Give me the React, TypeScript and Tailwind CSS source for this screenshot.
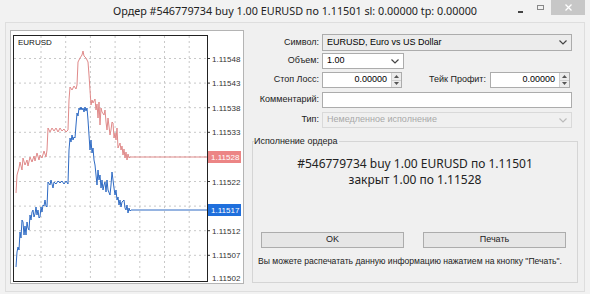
import React from 'react'

const red: [number, number][] = [
  [16,193],[17,175],[19,168],[20,162],[22,170],[23,158],[25,165],[27,160],[28,166],[30,157],[32,162],[34,156],[35,161],[37,153],[39,160],[40,155],[42,158],[44,151],[46,157],[47,150],[48,128],[50,132],[52,128],[54,131],[56,128],[58,132],[60,128],[62,131],[64,129],[66,132],[68,130],[69,100],[70,87],[72,90],[74,86],[76,89],[77,85],[78,62],[80,58],[82,55],[83,51],[84,56],[86,58],[88,62],[89,75],[90,90],[91,105],[92,100],[93,103],[95,99],[96,110],[97,104],[98,118],[99,102],[100,125],[101,108],[102,112],[104,115],[105,110],[106,122],[107,130],[108,118],[110,135],[111,130],[112,122],[113,123],[114,138],[115,133],[116,140],[117,128],[118,148],[120,143],[121,150],[122,146],[123,155],[124,149],[125,158],[126,152],[127,160],[128,154],[129,158],[130,157],[207,157],
]

const blue: [number, number][] = [
  [16,267],[17,252],[18,247],[19,250],[20,232],[21,238],[22,220],[23,222],[24,235],[25,226],[26,235],[27,222],[28,228],[29,230],[30,215],[31,220],[32,212],[33,210],[34,217],[35,214],[36,207],[37,215],[38,210],[39,218],[40,217],[41,207],[42,212],[43,205],[44,206],[45,200],[46,206],[47,207],[48,182],[50,185],[51,180],[53,188],[54,182],[56,184],[58,181],[60,183],[62,181],[64,184],[66,181],[68,184],[69,150],[70,138],[71,142],[72,135],[73,140],[74,137],[75,138],[76,125],[77,113],[78,116],[79,108],[80,110],[81,107],[82,110],[83,108],[84,112],[85,107],[86,111],[87,108],[88,120],[89,135],[90,150],[91,140],[92,153],[93,148],[94,160],[95,165],[96,175],[97,185],[98,170],[99,180],[100,175],[101,188],[102,180],[103,190],[104,185],[105,182],[106,192],[107,180],[108,190],[110,195],[111,185],[112,172],[113,180],[114,188],[115,195],[116,190],[117,200],[118,197],[119,205],[120,200],[121,207],[122,202],[124,200],[125,208],[126,210],[127,205],[128,213],[129,208],[130,211],[131,210],[207,210],
]

const levels = [
  { y: 58.5, t: '1.11548' },
  { y: 83.1, t: '1.11543' },
  { y: 107.7, t: '1.11538' },
  { y: 132.3, t: '1.11533' },
  { y: 156.9, t: '' },
  { y: 181.5, t: '1.11522' },
  { y: 206.1, t: '' },
  { y: 230.7, t: '1.11512' },
  { y: 255.3, t: '1.11507' },
]

const pts = (a: [number, number][]) => a.map(p => p.join(',')).join(' ')

const Chart: React.FC = () => (
  <svg width="232" height="252" viewBox="11 31 232 252" style={{ fontFamily: '"Liberation Sans", Arial, sans-serif' }}>
    <rect x="11" y="31" width="232" height="252" fill="#fff" />
    {levels.map(l => (
      <g key={l.y}>
        <line x1="14" x2="207" y1={l.y} y2={l.y} stroke="#c8c8c8" strokeDasharray="2 3" />
        <line x1="207" x2="210" y1={l.y} y2={l.y} stroke="#333" />
        {l.t && <text x="212" y={l.y + 3} fontSize="8" fill="#333">{l.t}</text>}
      </g>
    ))}
    {[41, 65.7, 90.4, 115.1, 139.8, 164.5, 189.2].map(x => (
      <line key={x} x1={x} x2={x} y1="36" y2="281" stroke="#c8c8c8" strokeDasharray="2 3" />
    ))}
    <polyline points={pts(red)} fill="none" stroke="#e08a8a" strokeWidth="1" />
    <polyline points={pts(blue)} fill="none" stroke="#2f6bc4" strokeWidth="1" />
    <rect x="13.5" y="35.5" width="194" height="246" fill="none" stroke="#222" />
    <text x="18" y="45" fontSize="8" fill="#111">EURUSD</text>
    <rect x="208" y="151" width="33" height="12" fill="#ec8585" />
    <text x="211" y="160" fontSize="8" fill="#fff">1.11528</text>
    <rect x="208" y="204" width="33" height="12" fill="#1f6fdc" />
    <text x="211" y="213" fontSize="8" fill="#fff">1.11517</text>
    <text x="212" y="281" fontSize="8" fill="#333">1.11502</text>
  </svg>
)

const Spin: React.FC = () => (
  <div className="flex h-full w-[10px] flex-col border-l border-[#d0d0d0] bg-[#ececec]">
    <div className="flex flex-1 items-center justify-center border-b border-[#d0d0d0]">
      <svg width="5" height="3" viewBox="0 0 5 3"><path d="M0 3L2.5 0L5 3Z" fill="#555" /></svg>
    </div>
    <div className="flex flex-1 items-center justify-center">
      <svg width="5" height="3" viewBox="0 0 5 3"><path d="M0 0L2.5 3L5 0Z" fill="#555" /></svg>
    </div>
  </div>
)

const Chevron: React.FC<{ color?: string }> = ({ color = '#444' }) => (
  <svg width="8" height="5" viewBox="0 0 8 5" className="mr-[4px]">
    <path d="M0.5 0.5L4 4L7.5 0.5" fill="none" stroke={color} strokeWidth="1.2" />
  </svg>
)

const Label: React.FC<{ children: React.ReactNode }> = ({ children }) => (
  <div className="w-[70px] shrink-0 pr-[3px] text-right text-[#222]">{children}</div>
)

const App: React.FC = () => {
  return (
    <div className="flex h-[294px] w-[590px] flex-col overflow-hidden bg-[#f2f2f2] text-[9px] text-black" style={{ fontFamily: '"Liberation Sans", Arial, sans-serif' }}>
      <div className="relative flex h-[22px] shrink-0 items-center justify-center">
        <span className="text-[10.8px] text-[#222]" style={{ fontFamily: '"Noto Sans", sans-serif' }}>
          Ордер #546779734 buy 1.00 EURUSD по 1.11501 sl: 0.00000 tp: 0.00000
        </span>
        <div className="absolute right-[5px] top-0 flex items-start">
          <div className="mt-[11px] mr-[14px] h-[2px] w-[5px] bg-[#444]" />
          <div className="mt-[5px] mr-[7px] h-[5px] w-[7px] border border-[#888]" />
          <div className="flex h-[15px] w-[34px] items-center justify-center bg-[#c7c7c7]">
            <svg width="7" height="7" viewBox="0 0 7 7"><path d="M0.5 0.5L6.5 6.5M6.5 0.5L0.5 6.5" stroke="#fff" strokeWidth="1.3" /></svg>
          </div>
        </div>
      </div>
      <div className="mx-[5px] mb-[2px] flex flex-1 border border-[#dedede] bg-[#f0f0f0] pl-[4px] pt-[7px]">
        <div className="h-[254px] w-[234px] shrink-0 border border-[#b4b4b4] bg-white">
          <Chart />
        </div>
        <div className="ml-[8px] flex w-[326px] flex-col">
          <div className="mt-[4px] flex h-[17px] items-center">
            <Label>Символ:</Label>
            <div className="flex h-full flex-1 items-center justify-between border border-[#acacac] bg-[#ececec] pl-[4px]">
              <span>EURUSD, Euro vs US Dollar</span>
              <Chevron />
            </div>
            <div className="w-[6px]" />
          </div>
          <div className="mt-[2px] flex h-[16px] items-center">
            <Label>Объем:</Label>
            <div className="flex h-full w-[82px] items-center justify-between border border-[#acacac] bg-white pl-[4px]">
              <span>1.00</span>
              <Chevron />
            </div>
          </div>
          <div className="mt-[3px] flex h-[16px] items-center">
            <Label>Стоп Лосс:</Label>
            <div className="flex h-full w-[80px] items-center border border-[#acacac] bg-white">
              <span className="flex-1 pr-[4px] text-right">0.00000</span>
              <Spin />
            </div>
            <div className="w-[88px] pr-[4px] text-right text-[#222]">Тейк Профит:</div>
            <div className="flex h-full w-[80px] items-center border border-[#acacac] bg-white">
              <span className="flex-1 pr-[4px] text-right">0.00000</span>
              <Spin />
            </div>
          </div>
          <div className="mt-[4px] flex h-[16px] items-center">
            <Label>Комментарий:</Label>
            <div className="h-full flex-1 border border-[#acacac] bg-white" />
            <div className="w-[6px]" />
          </div>
          <div className="mt-[4px] flex h-[16px] items-center">
            <Label>Тип:</Label>
            <div className="flex h-full flex-1 items-center justify-between border border-[#d9d9d9] bg-[#f0f0f0] pl-[4px] text-[#a8a8a8]">
              <span>Немедленное исполнение</span>
              <Chevron color="#bbb" />
            </div>
            <div className="w-[6px]" />
          </div>
          <div className="relative mt-[13px] flex h-[142px] w-[326px] flex-col items-center border border-[#d5d5d5]">
            <span className="absolute left-[1px] top-[-6px] bg-[#f0f0f0] pr-[2px] leading-[11px] text-[#222]">Исполнение ордера</span>
            <div className="mt-[14px] flex flex-col items-center text-[12px] leading-[16px] text-[#222]" style={{ fontFamily: '"Noto Sans", sans-serif' }}>
              <span>#546779734 buy 1.00 EURUSD по 1.11501</span>
              <span>закрыт 1.00 по 1.11528</span>
            </div>
            <div className="mt-[44px] flex w-full gap-[19px] pl-[8px]">
              <button className="h-[16px] w-[143px] border border-[#acacac] bg-[#e6e6e6] text-[9px] text-[#222]">OK</button>
              <button className="h-[16px] w-[143px] border border-[#acacac] bg-[#e6e6e6] text-[9px] text-[#222]">Печать</button>
            </div>
            <div className="mt-[7px] w-full pl-[5px] text-[8.6px] text-[#222]">
              Вы можете распечатать данную информацию нажатием на кнопку "Печать".
            </div>
          </div>
        </div>
      </div>
    </div>
  )
}

export default App
